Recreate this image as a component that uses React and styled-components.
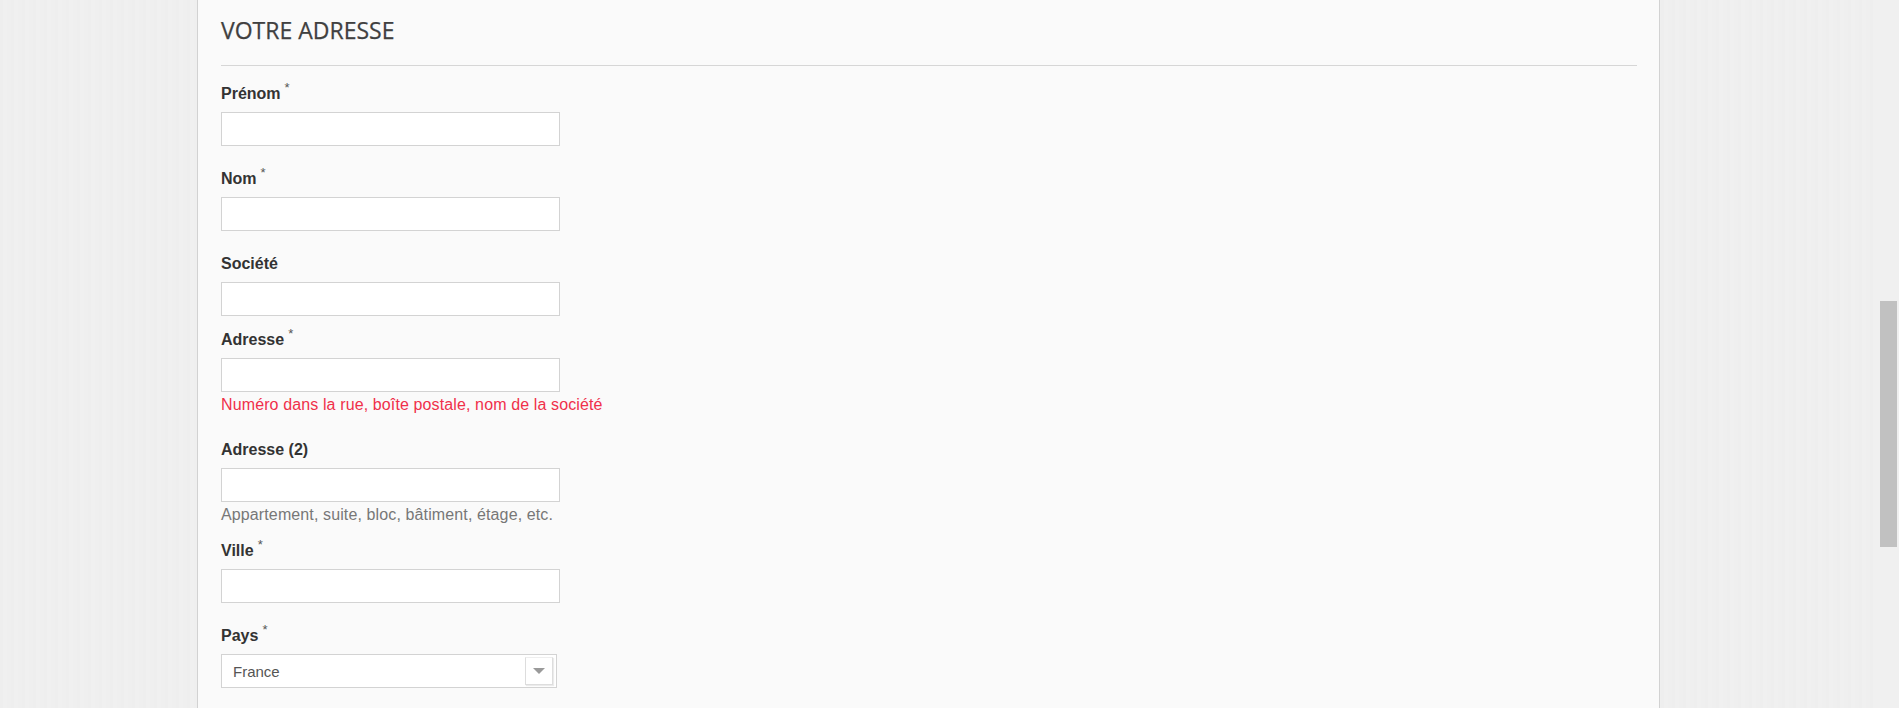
import React from "react";
import styled, { createGlobalStyle } from "styled-components";

const GlobalStyle = createGlobalStyle`
  html, body {
    margin: 0;
    padding: 0;
    height: 708px;
    overflow: hidden;
  }
  body {
    background-color: #efefef;
    background-image: repeating-linear-gradient(
      90deg,
      #eeeeee 0px,
      #eeeeee 3px,
      #f0f0f0 3px,
      #f0f0f0 7px,
      #efefef 7px,
      #efefef 11px
    );
    font-family: "Liberation Sans", Arial, sans-serif;
  }
`;

const Page = styled.div`
  padding-left: 197px;
  width: 1463px;
`;

const Panel = styled.section`
  box-sizing: border-box;
  width: 1463px;
  min-height: 760px;
  background: #fafafa;
  border-left: 1px solid #d2d2d2;
  border-right: 1px solid #d2d2d2;
  padding: 15px 22px 40px 23px;
`;

const Heading = styled.h2`
  margin: 0;
  font-family: "Open Sans", sans-serif;
  font-weight: 500;
  font-size: 23px;
  line-height: 30px;
  color: #404040;
  text-transform: uppercase;
  padding-bottom: 20px;
  border-bottom: 1px solid #d6d6d6;
  -webkit-text-stroke: 0.25px #404040;
`;

const Form = styled.form`
  display: flex;
  flex-direction: column;
  padding-top: 17px;
`;

const Field = styled.div`
  display: flex;
  flex-direction: column;
  align-items: flex-start;
  margin-bottom: ${(p) => p.$gap}px;
`;

const Label = styled.label`
  font-size: 16px;
  line-height: 21px;
  font-weight: 700;
  color: #333333;
  margin-bottom: 8px;
`;

const Required = styled.sup`
  font-size: 13px;
  font-weight: 400;
  color: #555555;
  vertical-align: top;
  line-height: 13px;
  position: relative;
  top: -2px;
  margin-left: 4px;
`;

const TextInput = styled.input`
  box-sizing: border-box;
  width: 339px;
  height: 34px;
  margin: 0;
  border: 1px solid #d3d3d3;
  background: #ffffff;
  padding: 0 10px;
  font-family: "Liberation Sans", Arial, sans-serif;
  font-size: 15px;
  outline: none;
`;

const Hint = styled.div`
  margin-top: 3px;
  font-size: 16px;
  line-height: 20px;
  letter-spacing: 0.12px;
  color: ${(p) => (p.$error ? "#f0304a" : "#777777")};
`;

const Select = styled.div`
  box-sizing: border-box;
  width: 336px;
  height: 34px;
  border: 1px solid #d3d3d3;
  background: #ffffff;
  display: flex;
  align-items: stretch;
  padding: 2px 3px 2px 0;
`;

const SelectValue = styled.span`
  flex: 1;
  display: flex;
  align-items: center;
  padding-left: 11px;
  font-size: 15px;
  color: #555555;
`;

const SelectButton = styled.span`
  box-sizing: border-box;
  width: 28px;
  display: flex;
  align-items: center;
  justify-content: center;
  border: 1px solid #dddddd;
  border-top-color: #eeeeee;
  box-shadow: 1px 1px 1px rgba(0, 0, 0, 0.08);
  background: #ffffff;
`;

const Caret = styled.span`
  width: 0;
  height: 0;
  border-left: 6px solid transparent;
  border-right: 6px solid transparent;
  border-top: 6px solid #9a9a9a;
`;

const ScrollTrack = styled.div`
  position: fixed;
  top: 0;
  right: 0;
  width: 23px;
  height: 708px;
  background: #f0f0f0;
`;

const ScrollThumb = styled.div`
  position: absolute;
  left: 4px;
  top: 301px;
  width: 17px;
  height: 246px;
  background: #c1c1c1;
`;

const fields = [
  { label: "Prénom", required: true, gap: 22 },
  { label: "Nom", required: true, gap: 22 },
  { label: "Société", required: false, gap: 13 },
  {
    label: "Adresse",
    required: true,
    gap: 24,
    hint: "Numéro dans la rue, boîte postale, nom de la société",
    error: true,
  },
  {
    label: "Adresse (2)",
    required: false,
    gap: 15,
    hint: "Appartement, suite, bloc, bâtiment, étage, etc.",
  },
  { label: "Ville", required: true, gap: 22 },
];

export default function App() {
  return (
    <>
      <GlobalStyle />
      <Page>
        <Panel>
          <Heading>Votre adresse</Heading>
          <Form>
            {fields.map((f) => (
              <Field key={f.label} $gap={f.gap}>
                <Label>
                  {f.label}
                  {f.required && <Required>*</Required>}
                </Label>
                <TextInput type="text" />
                {f.hint && <Hint $error={f.error}>{f.hint}</Hint>}
              </Field>
            ))}
            <Field $gap={0}>
              <Label>
                Pays<Required>*</Required>
              </Label>
              <Select>
                <SelectValue>France</SelectValue>
                <SelectButton>
                  <Caret />
                </SelectButton>
              </Select>
            </Field>
          </Form>
        </Panel>
      </Page>
      <ScrollTrack>
        <ScrollThumb />
      </ScrollTrack>
    </>
  );
}
